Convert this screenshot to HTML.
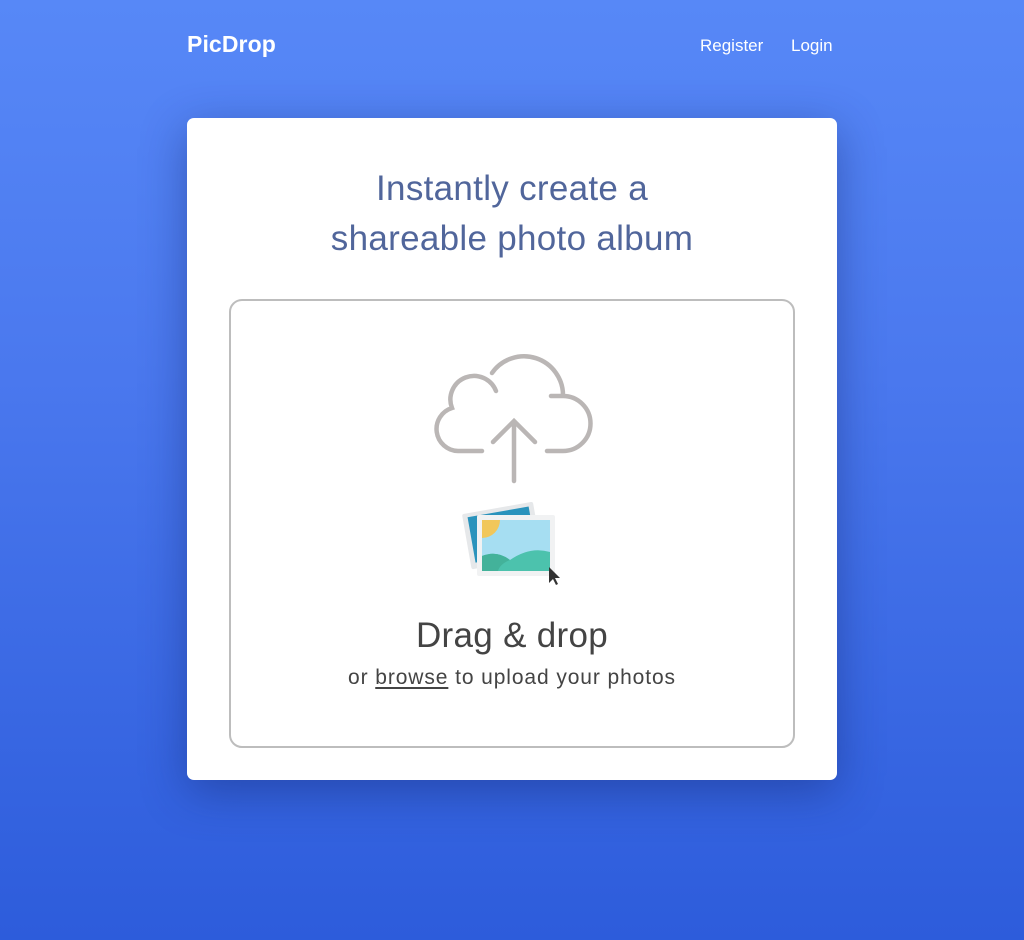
<!DOCTYPE html>
<html><head><style>
html,body{margin:0;padding:0}
body{width:1024px;height:940px;background:linear-gradient(180deg,#5788f7 0%,#4a78ee 40%,#2d5cdb 100%);font-family:"Liberation Sans",sans-serif;position:relative;overflow:hidden}
.logo{position:absolute;left:187px;top:31px;color:#fff;font-size:23px;font-weight:bold;letter-spacing:0.1px}
.nav{position:absolute;top:36px;color:#fff;font-size:17px}
.card{position:absolute;left:187px;top:118px;width:650px;height:662px;background:#fff;border-radius:7px;box-shadow:0 12px 45px rgba(20,40,110,.45)}
h1{position:absolute;left:0;width:650px;top:46px;margin:0;text-align:center;font-weight:normal;font-size:35px;line-height:50px;color:#51669b;letter-spacing:0.3px}
.drop{position:absolute;left:42px;top:181px;width:566px;height:449px;border:2px solid #bdbdbd;border-radius:13px;box-sizing:border-box}
.t1{position:absolute;left:0;width:650px;top:498px;text-align:center;font-size:35px;color:#444;letter-spacing:0.3px}
.t2{position:absolute;left:0;width:650px;top:548px;text-align:center;font-size:21px;color:#444;letter-spacing:0.9px}
.t2 u{text-underline-offset:3px}
</style></head><body>
<div class="logo">PicDrop</div>
<div class="nav" style="left:700px">Register</div>
<div class="nav" style="left:791px">Login</div>
<div class="card">
<h1>Instantly create a<br>shareable photo album</h1>
<div class="drop"></div>
<svg style="position:absolute;left:0;top:0" width="650" height="662" viewBox="187 118 650 662">
<g fill="none" stroke="#bab6b5" stroke-width="4.5" stroke-linecap="round">
<path d="M482 451 H458 A22 22 0 0 1 452 408 A17 17 0 0 1 496 391 M492 373 A39 39 0 0 1 563 396 M551 396 H563 A27.5 27.5 0 0 1 563 451 H547"/>
<path d="M514 481 V422 M493 442 L514 421 L535 442"/>
</g>
<g transform="rotate(-10 500 540)"><rect x="467" y="508" width="72" height="56" fill="#e6e8ea" rx="2"/><rect x="472" y="512" width="62" height="46" fill="#2a93bc"/></g>
<rect x="477" y="515" width="78" height="61" fill="#f1f2f3" rx="2"/>
<rect x="482" y="520" width="68" height="51" fill="#a6def2"/>
<path d="M482 520 h18 a18 18 0 0 1 -18 18 z" fill="#f1c75a"/>
<path d="M482 556 q15 -6 28 4 q20 -14 40 -8 v19 h-68 z" fill="#4cc2ad"/>
<path d="M482 556 q15 -6 28 4 q-10 4 -12 11 h-16z" fill="#43b29a"/>
<path d="M549 567 v16 l4 -4 l3 6 l2 -1 l-3 -6 l5 0 z" fill="#333"/>
</svg>
<div class="t1">Drag &amp; drop</div>
<div class="t2">or <u>browse</u> to upload your photos</div>
</div>
</body></html>
